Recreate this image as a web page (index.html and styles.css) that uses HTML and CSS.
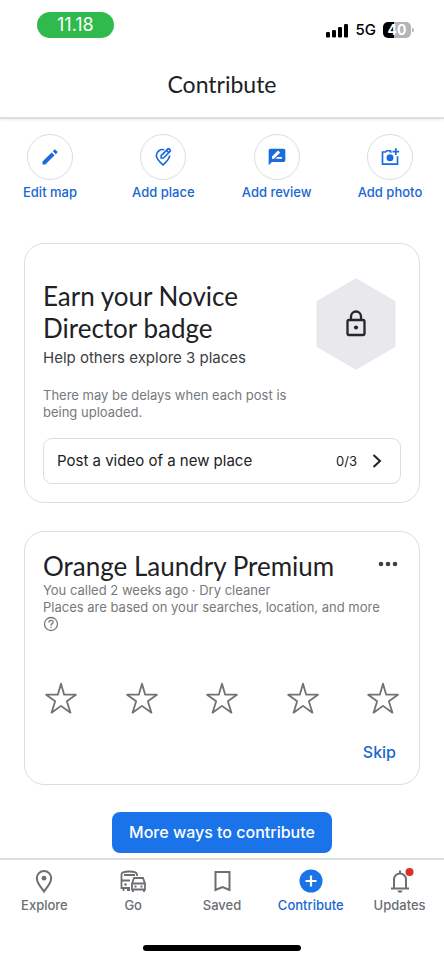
FILE: index.html
```html
<!DOCTYPE html>
<html lang="en">
<head>
<meta charset="utf-8">
<meta name="viewport" content="width=device-width, initial-scale=1">
<title>Contribute</title>
<link rel="stylesheet" href="styles.css">
</head>
<body>
<svg class="defs" width="0" height="0" aria-hidden="true">
  <symbol id="star" viewBox="0 0 32 32"><path d="M16 2.500 19 12.900H30L21.500 19 24.900 29.800 16 23.400 7.100 29.800 10.500 19 2 12.900H13Z" fill="none" stroke="currentColor" stroke-width="1.700" stroke-linejoin="round"/></symbol>
</svg>
<header class="top">
  <div class="status">
    <span class="time">11.18</span>
    <div class="signals">
      <svg width="23" height="15" viewBox="0 0 23 15" aria-hidden="true"><rect x="0" y="9" width="4" height="5.500" rx="1.200"/><rect x="6" y="7" width="4" height="7.500" rx="1.200"/><rect x="12" y="4" width="4" height="10.500" rx="1.200"/><rect x="18" y="1" width="4" height="13.500" rx="1.200"/></svg>
      <span class="network">5G</span>
      <span class="battery">40</span>
    </div>
  </div>
  <h1 class="page-title">Contribute</h1>
</header>
<main class="content">
  <nav class="actions" aria-label="Contribution types">
    <button class="action"><span class="ring"><svg width="20" height="20" viewBox="0 0 24 24" aria-hidden="true"><path fill="currentColor" d="M3 17.500V21h3.500L17.500 10 14 6.500ZM20.700 6.900c.4-.4.4-1 0-1.400l-2.200-2.200c-.4-.4-1-.4-1.400 0l-1.700 1.800 3.500 3.500Z"/></svg></span>Edit map</button>
    <button class="action"><span class="ring"><svg width="20" height="20" viewBox="0 0 24 24" fill="none" stroke="currentColor" stroke-width="2" aria-hidden="true"><path d="M13.500 3.300A7.500 7.500 0 0 0 4 10.200C4 14.500 8.500 18 12 21.500 15.500 18 20 14.500 20 10.200"/><path d="M9.800 13.200V10.400L17.600 2.600C18.200 2 19 2 19.600 2.600L20.400 3.400C21 4 21 4.800 20.400 5.400L12.600 13.200Z"/><path d="m16.300 4 2.700 2.700"/></svg></span>Add place</button>
    <button class="action"><span class="ring"><svg width="20" height="20" viewBox="0 0 24 24" aria-hidden="true"><path fill="currentColor" d="M20 2H4a2 2 0 0 0-2 2v18l4-4h14a2 2 0 0 0 2-2V4a2 2 0 0 0-2-2Z"/><path fill="#fff" d="M6 14v-2.500l6.900-6.900c.2-.2.500-.2.700 0l1.800 1.800c.2.200.2.500 0 .7L8.500 14Zm12 0h-7.500l2-2H18Z"/></svg></span>Add review</button>
    <button class="action"><span class="ring"><svg width="20" height="20" viewBox="0 0 24 24" fill="none" stroke="currentColor" stroke-width="2" aria-hidden="true"><path d="M14 6H12.500V4.500H8L6.500 6H3V20.500H21V11"/><circle cx="12" cy="13" r="4.200" fill="currentColor" stroke="none"/><path d="M19 1.500V9.500M15 5.500H23"/></svg></span>Add photo</button>
  </nav>

  <section class="card badge-card">
    <div class="badge-head">
      <div>
        <h2 class="title">Earn your Novice Director badge</h2>
        <p class="subtitle">Help others explore 3 places</p>
      </div>
      <svg class="badge" width="80" height="92" viewBox="0 0 80 92" role="img" aria-label="Locked badge"><path d="M40 2 78 24V68L40 90 2 68V24Z" fill="#e8e8ed" stroke="#e8e8ed" stroke-width="3" stroke-linejoin="round"/><g fill="none" stroke="#24272b" stroke-width="2.300"><rect x="31.500" y="42" width="17" height="15" rx="1.500"/><path d="M35 42V38.500a5 5 0 0 1 10 0V42"/></g><circle cx="40" cy="49.500" r="2.100" fill="#24272b"/></svg>
    </div>
    <p class="note badge-note">There may be delays when each post is being uploaded.</p>
    <button class="task"><span class="task-name">Post a video of a new place</span><span class="count">0/3</span><svg width="12" height="16" viewBox="0 0 12 16" aria-hidden="true"><path d="m2.500 2 6.500 6-6.500 6" fill="none" stroke="currentColor" stroke-width="2"/></svg></button>
  </section>

  <section class="card place-card">
    <div class="place-head">
      <h2 class="title">Orange Laundry Premium</h2>
      <button class="more" aria-label="More options"><svg width="20" height="6" viewBox="0 0 20 6" fill="currentColor"><circle cx="3" cy="3" r="2.300"/><circle cx="10" cy="3" r="2.300"/><circle cx="17" cy="3" r="2.300"/></svg></button>
    </div>
    <p class="note">You called 2 weeks ago · Dry cleaner</p>
    <p class="note">Places are based on your searches, location, and more</p>
    <button class="help" aria-label="About these suggestions"><svg width="16" height="16" viewBox="0 0 16 16" fill="none" stroke="currentColor" stroke-width="1.300"><circle cx="8" cy="8" r="6.500"/><path d="M5.900 6.500C5.900 3.500 10.200 3.700 10.100 6.200 10 7.700 8 7.600 8 9.400"/><circle cx="8" cy="11.300" r=".8" fill="currentColor" stroke="none"/></svg></button>
    <div class="stars">
      <button aria-label="1 star"><svg width="34" height="34"><use href="#star"/></svg></button>
      <button aria-label="2 stars"><svg width="34" height="34"><use href="#star"/></svg></button>
      <button aria-label="3 stars"><svg width="34" height="34"><use href="#star"/></svg></button>
      <button aria-label="4 stars"><svg width="34" height="34"><use href="#star"/></svg></button>
      <button aria-label="5 stars"><svg width="34" height="34"><use href="#star"/></svg></button>
    </div>
    <button class="skip">Skip</button>
  </section>
  <button class="primary">More ways to contribute</button>
</main>
<footer class="bottom">
  <nav class="tabs" aria-label="Main">
    <a class="tab" href="#explore"><svg width="26" height="26" viewBox="0 0 26 26" fill="none" stroke="currentColor" stroke-width="2" aria-hidden="true"><path d="M13 23.500C10.500 19.500 5.800 15.500 5.800 10.200a7.200 7.200 0 0 1 14.400 0C20.200 15.500 15.500 19.500 13 23.500Z"/><circle cx="13" cy="10.200" r="2.400" fill="currentColor" stroke="none"/></svg>Explore</a>
    <a class="tab" href="#go"><svg width="28" height="26" viewBox="0 0 28 26" fill="none" stroke="currentColor" stroke-width="1.800" aria-hidden="true"><path d="M11 20H2.500V6.500C2.500 2.500 18 2.500 18 6.500V8M2.500 12.500H11M4.500 20V23M8 22H11M5 7H16"/><circle cx="6.500" cy="16.500" r="1.300" fill="currentColor" stroke="none"/><path d="M13 15.500 15 10H24L26 15.500V21.500H13ZM13 15.500H26M14 21V24M25 21V24"/><path d="M15.500 18.500H17.500M21.500 18.500H23.500"/></svg>Go</a>
    <a class="tab" href="#saved"><svg width="26" height="26" viewBox="0 0 26 26" fill="none" stroke="currentColor" stroke-width="2" aria-hidden="true"><path d="M6.500 4H20.500V22L13.500 19 6.500 22Z"/></svg>Saved</a>
    <a class="tab active" href="#contribute" aria-current="page"><svg width="26" height="26" viewBox="0 0 26 26" aria-hidden="true"><circle cx="13" cy="13" r="11.500" fill="#1a73e8"/><path d="M13 7.500V18.500M7.500 13H18.500" stroke="#fff" stroke-width="2.200"/></svg>Contribute</a>
    <a class="tab" href="#updates"><svg width="28" height="26" viewBox="0 0 28 26" fill="none" stroke="currentColor" stroke-width="2" aria-hidden="true"><path d="M5 20.500H23M8 20V11.500a6 6 0 0 1 12 0V20"/><path d="M14 2.500V5.500"/><path d="M11.500 22.500a2.500 2.200 0 0 0 5 0Z" fill="currentColor" stroke="none"/><circle cx="23.500" cy="4" r="4" fill="#d93025" stroke="none"/></svg>Updates</a>
  </nav>
  <div class="home-bar"></div>
</footer>
</body>
</html>
```
FILE: styles.css
```css
* { box-sizing: border-box; }

body {
  margin: 0;
  min-height: 100vh;
  display: flex;
  flex-direction: column;
  background: #fff;
  color: #202124;
  font-family: Inter, "Liberation Sans", sans-serif;
}

h1, h2, p { margin: 0; font-weight: 400; }
svg { display: block; flex: none; }
.defs { position: absolute; }

button {
  margin: 0;
  padding: 0;
  border: 0;
  background: none;
  color: inherit;
  font: inherit;
  cursor: pointer;
}

.top {
  padding-bottom: 17px;
  border-bottom: 2px solid #dedfe0;
  box-shadow: 0 1px 3px #00000014;
}

.status {
  display: flex;
  justify-content: space-between;
  align-items: flex-start;
  padding: 12px 33px 0 37px;
}

.time {
  padding: 0 20px;
  border-radius: 13px;
  background: #30b94d;
  color: #fff;
  font-size: 18px;
  line-height: 26px;
}

.signals {
  display: flex;
  align-items: center;
  gap: 7px;
  padding-top: 8px;
  color: #000;
}

.network { font-size: 15px; font-weight: 500; line-height: 20px; }

.battery {
  position: relative;
  width: 28px;
  border-radius: 5px;
  background: linear-gradient(90deg, #000 40%, #b5b5b5 40%);
  color: #fff;
  font-size: 14px;
  font-weight: 700;
  line-height: 16px;
  text-align: center;
}

.battery::after {
  content: "";
  position: absolute;
  left: 29px;
  top: 6px;
  width: 2px;
  height: 4px;
  border-radius: 0 2px 2px 0;
  background: #b5b5b5;
}

.page-title {
  padding-top: 28px;
  font-family: Lato, Inter, sans-serif;
  font-size: 23px;
  line-height: 32px;
  text-align: center;
}

.content {
  flex: 1;
  display: flex;
  flex-direction: column;
  padding: 15px 24px 5px;
}

.actions {
  display: flex;
  justify-content: space-between;
  margin: 0 -6px 42px -10px;
}

.action {
  display: flex;
  flex-direction: column;
  align-items: center;
  gap: 3px;
  width: 72px;
  color: #1967d2;
  font-size: 13px;
  font-weight: 500;
  line-height: 18px;
  white-space: nowrap;
}

.ring {
  display: grid;
  place-items: center;
  width: 46px;
  height: 46px;
  border: 1px solid #dadce0;
  border-radius: 50%;
  color: #1a6be0;
}

.card {
  border: 1px solid #dcdddf;
  border-radius: 20px;
  padding: 0 18px;
}

.badge-card { padding-top: 34px; padding-bottom: 18px; margin-bottom: 28px; }

.badge-head {
  display: flex;
  justify-content: space-between;
  align-items: flex-start;
  padding-right: 5px;
}

.title {
  font-family: Lato, Inter, sans-serif;
  font-size: 26px;
  line-height: 32px;
}

.badge-head .title { padding-top: 2px; max-width: 220px; }
.subtitle { font-size: 15px; line-height: 28px; color: #3c4043; }

.note { font-size: 13px; line-height: 17px; color: #76797d; }
.badge-note { max-width: 270px; padding-top: 15px; }

.task {
  display: flex;
  align-items: center;
  width: 100%;
  margin-top: 17px;
  padding: 11px 17px 11px 13px;
  border: 1px solid #dcdddf;
  border-radius: 9px;
  font-size: 15px;
  line-height: 22px;
}

.task-name { flex: 1; text-align: left; }
.count { margin-right: 14px; font-size: 13px; }

.place-card { padding-top: 18px; padding-bottom: 20px; }
.place-head { display: flex; justify-content: space-between; align-items: center; }
.more { padding: 0 3px 4px; color: #3c4043; }
.help { display: block; color: #76797d; }

.stars {
  display: flex;
  justify-content: space-between;
  margin-top: 49px;
  padding: 0 1px;
  color: #707376;
}

.skip {
  display: block;
  margin: 26px 5px 0 auto;
  padding-bottom: 1px;
  color: #1967d2;
  font-size: 16px;
  font-weight: 500;
  line-height: 22px;
}

.primary {
  align-self: center;
  margin-top: 27px;
  padding: 0 17px;
  border-radius: 8px;
  background: #1a73e8;
  color: #fff;
  font-size: 16px;
  font-weight: 500;
  line-height: 41px;
}

.bottom { border-top: 2px solid #dedfe0; }

.tabs { display: grid; grid-template-columns: repeat(5, 1fr); padding-top: 8px; }

.tab {
  display: flex;
  flex-direction: column;
  align-items: center;
  gap: 2px;
  color: #6b6e72;
  font-size: 13px;
  font-weight: 500;
  line-height: 18px;
  text-decoration: none;
}

.active { color: #1967d2; }

.home-bar {
  width: 158px;
  height: 6px;
  margin: 31px auto 9px;
  border-radius: 3px;
  background: #000;
}
```
